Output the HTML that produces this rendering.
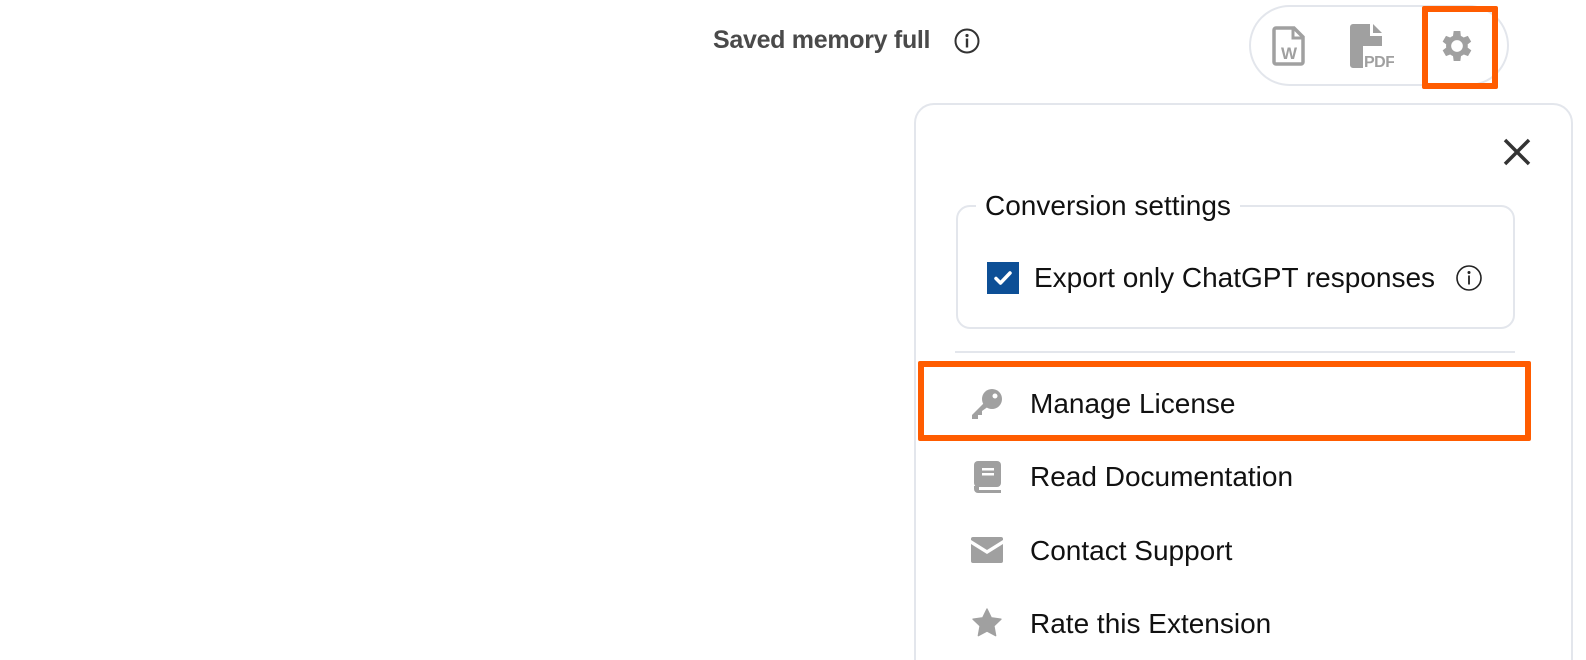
<!DOCTYPE html>
<html style="overflow:hidden;width:1586px;height:660px"><head><style>
*{margin:0;padding:0;box-sizing:border-box}
html,body{overflow:hidden}
body{width:1586px;height:660px;background:#fff;position:relative;overflow:hidden;font-family:"Liberation Sans",sans-serif;color:#111}
.abs{position:absolute}
.item{position:absolute;left:1030px;font-size:28px;color:#111;line-height:34px}
</style></head><body>
<div class="abs" style="left:713px;top:25px;font-size:25px;line-height:30px;font-weight:bold;color:#4a4a4a;letter-spacing:-0.3px">Saved memory full</div>
<svg class="abs" style="left:953px;top:27px" width="28" height="28" viewBox="0 0 28 28"><circle cx="14" cy="14" r="11.5" fill="none" stroke="#333" stroke-width="2"/><circle cx="14" cy="8.5" r="1.6" fill="#333"/><rect x="12.8" y="11.5" width="2.4" height="9" fill="#333"/></svg>

<div class="abs" style="left:1249px;top:5px;width:260px;height:81px;border:2px solid #e3e6ec;border-radius:41px;background:#fff"></div>
<svg class="abs" style="left:1272px;top:26px" width="34" height="40" viewBox="0 0 34 40"><path d="M4 2h18l9 9v25a2 2 0 0 1-2 2H4a2 2 0 0 1-2-2V4a2 2 0 0 1 2-2z" fill="none" stroke="#a0a0a0" stroke-width="3.5"/><path d="M21 3v9h9" fill="none" stroke="#a0a0a0" stroke-width="3"/><text x="17" y="33" text-anchor="middle" font-family="Liberation Sans" font-weight="bold" font-size="17" fill="#a0a0a0">W</text></svg>
<svg class="abs" style="left:1350px;top:24px" width="44" height="46" viewBox="0 0 44 46"><path d="M3 0h17v12h12v10H13v22H3a3 3 0 0 1-3-3V3a3 3 0 0 1 3-3z" fill="#a0a0a0"/><path d="M23 0l9 9h-9z" fill="#a0a0a0"/><text x="14" y="43" font-family="Liberation Sans" font-weight="bold" font-size="16" fill="#a0a0a0" letter-spacing="-0.5">PDF</text></svg>
<div class="abs" style="left:1422px;top:6px;width:76px;height:83px;border:6px solid #ff5c00;border-radius:2px"></div>
<svg class="abs" style="left:1437px;top:26px" width="40" height="40" viewBox="0 0 24 24"><path fill="#a0a0a0" d="M19.4 13a7.6 7.6 0 0 0 0-2l2.1-1.6-2-3.5-2.5 1a7.4 7.4 0 0 0-1.7-1L15 3h-4l-.4 2.9a7.4 7.4 0 0 0-1.7 1l-2.5-1-2 3.5L6.5 11a7.6 7.6 0 0 0 0 2l-2.1 1.6 2 3.5 2.5-1a7.4 7.4 0 0 0 1.7 1L11 21h4l.4-2.9a7.4 7.4 0 0 0 1.7-1l2.5 1 2-3.5zM13 15.5a3.5 3.5 0 1 1 0-7 3.5 3.5 0 0 1 0 7z" transform="translate(-1 0)"/></svg>

<div class="abs" style="left:914px;top:103px;width:659px;height:580px;border:2px solid #e3e6ec;border-radius:20px;background:#fff"></div>
<svg class="abs" style="left:1502px;top:137px" width="30" height="30" viewBox="0 0 30 30"><path d="M3 3L27 27M27 3L3 27" stroke="#333" stroke-width="3.5"/></svg>

<div class="abs" style="left:956px;top:205px;width:559px;height:124px;border:2px solid #e3e6ec;border-radius:14px"></div>
<div class="abs" style="left:976px;top:189px;padding:0 9px;background:#fff;font-size:28px;line-height:34px;color:#111">Conversion settings</div>
<div class="abs" style="left:987px;top:262px;width:32px;height:32px;background:#0d4f96"></div>
<svg class="abs" style="left:987px;top:262px" width="32" height="32" viewBox="0 0 32 32"><path d="M9 16.5l4.5 4.5L23 11" fill="none" stroke="#fff" stroke-width="3.5" stroke-linecap="round" stroke-linejoin="round"/></svg>
<div class="abs" style="left:1034px;top:261px;font-size:28px;line-height:34px;color:#111">Export only ChatGPT responses</div>
<svg class="abs" style="left:1455px;top:264px" width="28" height="28" viewBox="0 0 28 28"><circle cx="14" cy="14" r="12" fill="none" stroke="#222" stroke-width="1.6"/><circle cx="14" cy="8.5" r="1.5" fill="#222"/><rect x="13.1" y="11.5" width="1.8" height="9" fill="#222"/></svg>

<div class="abs" style="left:955px;top:351px;width:560px;height:2px;background:#e3e6ec"></div>

<div class="abs" style="left:918px;top:361px;width:613px;height:80px;border:6px solid #ff5c00;border-radius:2px"></div>
<svg class="abs" style="left:970px;top:388px" width="34" height="32" viewBox="0 0 34 32"><circle cx="22" cy="11" r="10" fill="#a0a0a0"/><circle cx="25" cy="8" r="2.5" fill="#fff"/><path d="M15 14L2 27v4h6v-4h4v-4l7-5z" fill="#a0a0a0"/></svg>
<div class="item" style="top:387px">Manage License</div>

<svg class="abs" style="left:973px;top:460px" width="30" height="34" viewBox="0 0 30 34"><rect x="1" y="1" width="27" height="26" rx="4" fill="#a0a0a0"/><path d="M1 26v3a4 4 0 0 0 4 4h23v-3H6v-4z" fill="#a0a0a0"/><rect x="9" y="8" width="12" height="2.5" fill="#fff"/><rect x="9" y="13" width="12" height="2.5" fill="#fff"/></svg>
<div class="item" style="top:460px">Read Documentation</div>

<svg class="abs" style="left:971px;top:537px" width="32" height="26" viewBox="0 0 32 26"><path d="M2 0h28a2 2 0 0 1 2 2v1L16 13 0 3V2a2 2 0 0 1 2-2z" fill="#a0a0a0"/><path d="M0 7l16 10 16-10v17a2 2 0 0 1-2 2H2a2 2 0 0 1-2-2z" fill="#a0a0a0"/></svg>
<div class="item" style="top:534px">Contact Support</div>

<svg class="abs" style="left:971px;top:607px" width="32" height="32" viewBox="0 0 24 24"><path d="M12 1.5l3.2 6.6 7.3 1-5.3 5.1 1.3 7.3L12 18l-6.5 3.5 1.3-7.3L1.5 9.1l7.3-1z" fill="#a0a0a0" stroke="#a0a0a0" stroke-linejoin="round" stroke-width="1"/></svg>
<div class="item" style="top:607px">Rate this Extension</div>
</body></html>
